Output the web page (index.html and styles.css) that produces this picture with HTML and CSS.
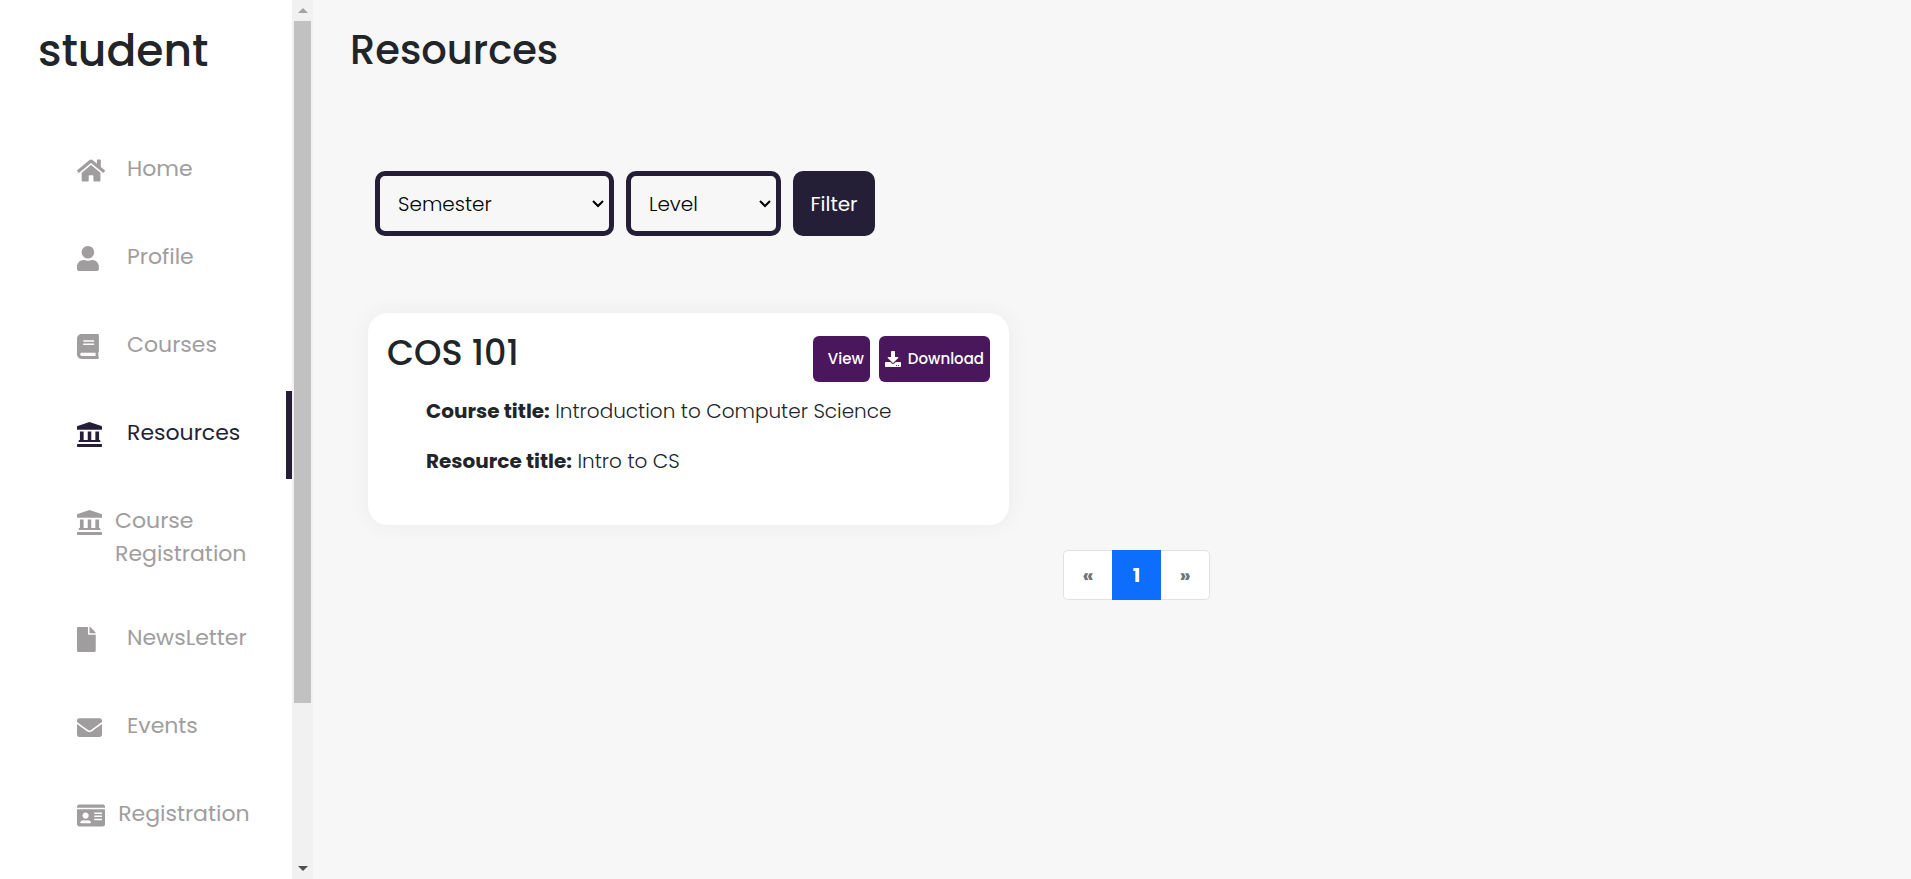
FILE: index.html
```html
<!DOCTYPE html>
<html lang="en">
<head>
    <meta charset="UTF-8">
    <meta name="viewport" content="width=device-width, initial-scale=1.0">
    <title>Resources</title>
    <link rel="stylesheet" href="styles.css">
</head>
<body>
    <aside class="sidebar">
        <div class="sidebar-content">
            <h2 class="brand">student</h2>
            <nav>
                <ul class="menu">
                    <li>
                        <a href="#">
                            <svg class="icon" viewBox="0 0 576 512" aria-hidden="true"><path d="M280.37 148.26L96 300.11V464a16 16 0 0 0 16 16l112.06-.29a16 16 0 0 0 15.92-16V368a16 16 0 0 1 16-16h64a16 16 0 0 1 16 16v95.64a16 16 0 0 0 16 16.05L464 480a16 16 0 0 0 16-16V300L295.67 148.26a12.19 12.19 0 0 0-15.3 0zM571.6 251.47L488 182.56V44.05a12 12 0 0 0-12-12h-56a12 12 0 0 0-12 12v72.61L318.47 43a48 48 0 0 0-61 0L4.34 251.47a12 12 0 0 0-1.6 16.9l25.5 31A12 12 0 0 0 45.15 301l235.22-193.74a12.19 12.19 0 0 1 15.3 0L530.9 301a12 12 0 0 0 16.9-1.6l25.5-31a12 12 0 0 0-1.7-16.93z"/></svg>
                            <span>Home</span>
                        </a>
                    </li>
                    <li>
                        <a href="#">
                            <svg class="icon" viewBox="0 0 448 512" aria-hidden="true"><path d="M224 256c70.7 0 128-57.3 128-128S294.7 0 224 0 96 57.3 96 128s57.3 128 128 128zm89.6 32h-16.7c-22.2 10.2-46.9 16-72.9 16s-50.6-5.8-72.9-16h-16.7C60.2 288 0 348.2 0 422.4V464c0 26.5 21.5 48 48 48h352c26.5 0 48-21.5 48-48v-41.6c0-74.2-60.2-134.4-134.4-134.4z"/></svg>
                            <span>Profile</span>
                        </a>
                    </li>
                    <li>
                        <a href="#">
                            <svg class="icon" viewBox="0 0 448 512" aria-hidden="true"><path d="M448 360V24c0-13.3-10.7-24-24-24H96C43 0 0 43 0 96v320c0 53 43 96 96 96h328c13.3 0 24-10.7 24-24v-16c0-7.5-3.5-14.3-8.9-18.7-4.2-15.4-4.2-59.3 0-74.7 5.4-4.3 8.9-11.1 8.9-18.6zM128 134c0-3.3 2.7-6 6-6h212c3.3 0 6 2.7 6 6v20c0 3.3-2.7 6-6 6H134c-3.3 0-6-2.7-6-6v-20zm0 64c0-3.3 2.7-6 6-6h212c3.3 0 6 2.7 6 6v20c0 3.3-2.7 6-6 6H134c-3.3 0-6-2.7-6-6v-20zm253.4 250H96c-17.7 0-32-14.3-32-32 0-17.6 14.4-32 32-32h285.4c-1.9 17.1-1.9 46.9 0 64z"/></svg>
                            <span>Courses</span>
                        </a>
                    </li>
                    <li class="active">
                        <a href="#" aria-current="page">
                            <svg class="icon" viewBox="0 0 512 512" aria-hidden="true"><path d="M256 0l244 84a18 18 0 0 1 12 17v45a14 14 0 0 1-14 14H14a14 14 0 0 1-14-14v-45a18 18 0 0 1 12-17zM60 192h76v176h84V192h72v176h84V192h76v176h16a10 10 0 0 1 10 10v32H34v-32a10 10 0 0 1 10-10h16zM14 448h484a14 14 0 0 1 14 14v36a14 14 0 0 1-14 14H14a14 14 0 0 1-14-14v-36a14 14 0 0 1 14-14z"/></svg>
                            <span>Resources</span>
                        </a>
                    </li>
                    <li class="wide">
                        <a href="#">
                            <svg class="icon" viewBox="0 0 512 512" aria-hidden="true"><path d="M256 0l244 84a18 18 0 0 1 12 17v45a14 14 0 0 1-14 14H14a14 14 0 0 1-14-14v-45a18 18 0 0 1 12-17zM60 192h76v176h84V192h72v176h84V192h76v176h16a10 10 0 0 1 10 10v32H34v-32a10 10 0 0 1 10-10h16zM14 448h484a14 14 0 0 1 14 14v36a14 14 0 0 1-14 14H14a14 14 0 0 1-14-14v-36a14 14 0 0 1 14-14z"/></svg>
                            <span>Course Registration</span>
                        </a>
                    </li>
                    <li>
                        <a href="#">
                            <svg class="icon" viewBox="0 0 384 512" aria-hidden="true"><path d="M224 136V0H24C10.7 0 0 10.7 0 24v464c0 13.3 10.7 24 24 24h336c13.3 0 24-10.7 24-24V160H248c-13.2 0-24-10.8-24-24zm160-14.1v6.1H256V0h6.1c6.4 0 12.5 2.5 17 7l97.9 98c4.5 4.5 7 10.6 7 16.9z"/></svg>
                            <span>NewsLetter</span>
                        </a>
                    </li>
                    <li>
                        <a href="#">
                            <svg class="icon" viewBox="0 0 512 512" aria-hidden="true"><path d="M502.3 190.8c3.9-3.1 9.7-.2 9.7 4.7V400c0 26.5-21.5 48-48 48H48c-26.5 0-48-21.5-48-48V195.6c0-5 5.7-7.8 9.7-4.7 22.4 17.4 52.1 39.5 154.1 113.6 21.1 15.4 56.7 47.8 92.2 47.6 35.7.3 72-32.8 92.3-47.6 102-74.1 131.6-96.3 154-113.7zM256 320c23.2.4 56.6-29.2 73.4-41.4 132.7-96.3 142.8-104.7 173.4-128.7 5.8-4.5 9.2-11.5 9.2-18.9v-19c0-26.5-21.5-48-48-48H48c-26.5 0-48 21.5-48 48v19c0 7.4 3.4 14.3 9.2 18.9 30.6 23.9 40.7 32.4 173.4 128.7 16.8 12.2 50.2 41.8 73.4 41.4z"/></svg>
                            <span>Events</span>
                        </a>
                    </li>
                    <li class="wide">
                        <a href="#">
                            <svg class="icon" viewBox="0 0 576 512" aria-hidden="true"><path d="M528 32H48C21.5 32 0 53.5 0 80v16h576V80c0-26.5-21.5-48-48-48zM0 432c0 26.5 21.5 48 48 48h480c26.5 0 48-21.5 48-48V128H0v304zm352-232c0-4.4 3.6-8 8-8h144c4.4 0 8 3.6 8 8v16c0 4.4-3.6 8-8 8H360c-4.4 0-8-3.6-8-8v-16zm0 64c0-4.4 3.6-8 8-8h144c4.4 0 8 3.6 8 8v16c0 4.4-3.6 8-8 8H360c-4.4 0-8-3.6-8-8v-16zm0 64c0-4.4 3.6-8 8-8h144c4.4 0 8 3.6 8 8v16c0 4.4-3.6 8-8 8H360c-4.4 0-8-3.6-8-8v-16zM176 192c35.3 0 64 28.7 64 64s-28.7 64-64 64-64-28.7-64-64 28.7-64 64-64zM67.1 396.2C75.5 370.5 99.6 352 128 352h8.2c12.3 5.1 25.7 8 39.8 8s27.6-2.9 39.8-8h8.2c28.4 0 52.5 18.5 60.9 44.2 3.2 9.9-5.2 19.8-15.6 19.8H82.7c-10.4 0-18.8-10-15.6-19.8z"/></svg>
                            <span>Registration</span>
                        </a>
                    </li>
                </ul>
            </nav>
        </div>
        <div class="scrollbar" aria-hidden="true">
            <div class="arrow up"></div>
            <div class="track"><div class="thumb"></div></div>
            <div class="arrow down"></div>
        </div>
    </aside>

    <main class="main">
        <h1>Resources</h1>

        <form class="filters">
            <div class="select-box semester">
                <select name="semester" aria-label="Semester">
                    <option>Semester</option>
                </select>
                <svg viewBox="0 0 12 8" aria-hidden="true"><path d="M1 1l5 5 5-5"/></svg>
            </div>
            <div class="select-box level">
                <select name="level" aria-label="Level">
                    <option>Level</option>
                </select>
                <svg viewBox="0 0 12 8" aria-hidden="true"><path d="M1 1l5 5 5-5"/></svg>
            </div>
            <button type="submit" class="filter-btn">Filter</button>
        </form>

        <section class="card">
            <div class="card-header">
                <h2>COS 101</h2>
                <div class="actions">
                    <a href="#" class="btn btn-view">View</a>
                    <a href="#" class="btn">
                        <svg viewBox="0 0 512 512" aria-hidden="true"><path d="M216 0h80c13.3 0 24 10.7 24 24v168h87.7c17.8 0 26.7 21.5 14.1 34.1L269.7 378.3c-7.5 7.5-19.8 7.5-27.3 0L90.1 226.1c-12.6-12.6-3.7-34.1 14.1-34.1H192V24c0-13.3 10.7-24 24-24zm296 376v112c0 13.3-10.7 24-24 24H24c-13.3 0-24-10.7-24-24V376c0-13.3 10.7-24 24-24h146.7l49 49c20.1 20.1 52.5 20.1 72.6 0l49-49H488c13.3 0 24 10.7 24 24zm-124 88c0-11-9-20-20-20s-20 9-20 20 9 20 20 20 20-9 20-20zm64 0c0-11-9-20-20-20s-20 9-20 20 9 20 20 20 20-9 20-20z"/></svg>
                        Download
                    </a>
                </div>
            </div>
            <div class="card-body">
                <p><b>Course title:</b> Introduction to Computer Science</p>
                <p><b>Resource title:</b> Intro to CS</p>
            </div>
        </section>

        <nav aria-label="Pages">
            <ul class="pagination">
                <li><a href="#" aria-label="Previous">«</a></li>
                <li class="active"><a href="#">1</a></li>
                <li><a href="#" aria-label="Next">»</a></li>
            </ul>
        </nav>
    </main>
</body>
</html>
```

FILE: styles.css
```css
* {
    box-sizing: border-box;
    margin: 0;
    padding: 0;
}
body {
    display: flex;
    height: 100vh;
    font-family: 'Poppins', 'Inter', sans-serif;
    font-size: 20px;
    font-weight: 300;
    line-height: 30px;
    color: #212529;
    background-color: #f7f7f7;
}
a {
    color: inherit;
    text-decoration: none;
}
ul {
    list-style: none;
}

/* sidebar */
.sidebar {
    display: flex;
    flex: none;
    width: 313px;
    background-color: #fff;
}
.sidebar-content {
    flex: 1;
    overflow: hidden;
}
.brand {
    padding: 21px 38px 0;
    font-size: 44px;
    font-weight: 500;
    line-height: 60px;
}
.menu {
    padding-top: 46px;
}
.menu li {
    min-height: 88px;
    padding: 25px 0 26px 77px;
    font-size: 22px;
    font-weight: 400;
    line-height: 33px;
    color: #a09d9f;
}
.menu a {
    display: grid;
    grid-template-columns: 28px 1fr;
    column-gap: 22px;
}
.menu .wide a {
    display: flex;
    column-gap: 13px;
}
.menu .icon {
    flex: none;
    height: 25px;
    margin-top: 6px;
    fill: currentColor;
}
.menu .active {
    color: #241f37;
    border-right: 6px solid #241f37;
}
.scrollbar {
    display: flex;
    flex-direction: column;
    flex: none;
    width: 21px;
    background-color: #f1f1f1;
}
.arrow {
    display: flex;
    flex: none;
    align-items: center;
    justify-content: center;
    height: 21px;
}
.arrow::before {
    content: "";
    border: 5px solid transparent;
}
.up::before {
    border-top: 0;
    border-bottom-color: #a3a3a3;
}
.down::before {
    border-bottom: 0;
    border-top-color: #505050;
}
.track {
    flex: 1;
    padding: 0 2px;
}
.thumb {
    height: calc(100% - 155px);
    background-color: #c1c1c1;
}

/* main */
.main {
    flex: 1;
    padding: 20px 0 0 37px;
}
h1 {
    font-size: 40px;
    font-weight: 500;
    line-height: 60px;
}
.filters {
    display: flex;
    gap: 12px;
    padding: 91px 0 0 25px;
}
.select-box {
    position: relative;
}
.select-box select {
    width: 100%;
    height: 65px;
    padding: 0 18px;
    border: 5px solid #241f37;
    border-radius: 10px;
    appearance: none;
    background: transparent;
    font: inherit;
    color: #000;
}
.select-box svg {
    position: absolute;
    right: 10px;
    top: 29px;
    width: 12px;
    fill: none;
    stroke: #000;
    stroke-width: 2;
    pointer-events: none;
}
.semester {
    width: 239px;
}
.level {
    width: 155px;
}
.filter-btn {
    width: 82px;
    border: 0;
    border-radius: 10px;
    background-color: #241f37;
    color: #fff;
    font: inherit;
    font-weight: 400;
}
.card {
    width: 641px;
    min-height: 212px;
    margin: 77px 0 25px 18px;
    padding: 23px 19px 29px;
    border-radius: 20px;
    background-color: #fff;
    box-shadow: 0 0 25px rgba(0, 0, 0, 0.05);
}
.card-header {
    display: flex;
    justify-content: space-between;
}
.card-header h2 {
    font-size: 35px;
    font-weight: 500;
    line-height: 34px;
}
.actions {
    display: flex;
    gap: 9px;
}
.btn {
    display: flex;
    align-items: center;
    gap: 7px;
    height: 46px;
    padding: 0 6px;
    border-radius: 6px;
    background-color: #4a175d;
    color: #fff;
    font-size: 15px;
    font-weight: 500;
}
.btn-view {
    padding-left: 15px;
}
.btn svg {
    width: 16px;
    fill: currentColor;
}
.card-body {
    padding: 14px 0 0 39px;
}
.card-body p {
    margin-bottom: 20px;
}
.card-body b {
    font-weight: 700;
}
.pagination {
    display: flex;
    justify-content: center;
    padding-left: 12px;
    font-weight: 700;
}
.pagination a {
    display: block;
    min-width: 49px;
    padding: 9px 0;
    border: 1px solid #dee2e6;
    background-color: #fff;
    color: #6c757d;
    text-align: center;
}
.pagination li:first-child a {
    border-right: 0;
    border-radius: 5px 0 0 5px;
}
.pagination li:last-child a {
    border-left: 0;
    border-radius: 0 5px 5px 0;
}
.pagination .active a {
    border-color: #0d6efd;
    background-color: #0d6efd;
    color: #fff;
}
```
